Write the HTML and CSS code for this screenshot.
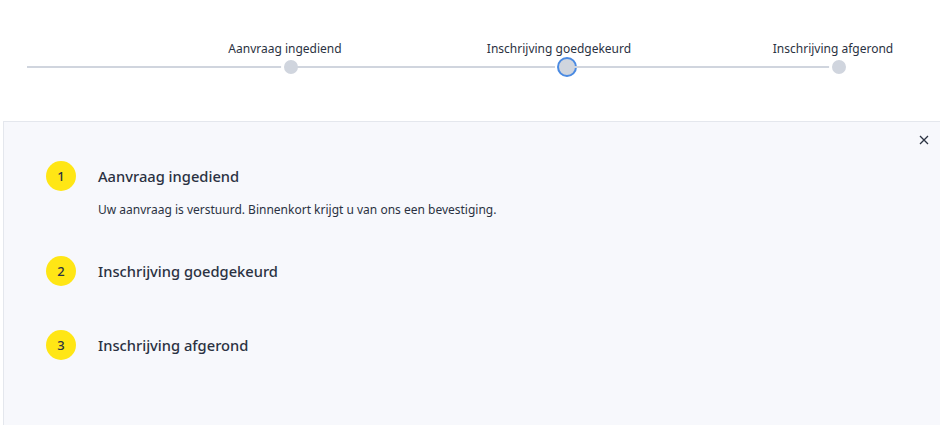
FILE: index.html
```html
<!DOCTYPE html>
<html lang="nl">
<head>
    <meta charset="utf-8">
    <meta name="viewport" content="width=device-width, initial-scale=1.0">
    <title>Inschrijving - voortgang</title>
    <link rel="stylesheet" href="styles.css">
</head>
<body>
    <!-- Voortgangsbalk -->
    <div class="progress">
        <div class="progress-step first">
            <span class="progress-label">Aanvraag ingediend</span>
            <span class="progress-dot"></span>
        </div>
        <div class="progress-step">
            <span class="progress-label">Inschrijving goedgekeurd</span>
            <span class="progress-dot active"></span>
        </div>
        <div class="progress-step">
            <span class="progress-label">Inschrijving afgerond</span>
            <span class="progress-dot"></span>
        </div>
    </div>

    <!-- Detailpaneel -->
    <div class="panel">
        <button class="panel-close" title="Sluiten">
            <svg width="10" height="10" viewBox="0 0 10 10"><path d="M1 1 L9 9 M9 1 L1 9" stroke="#2b3242" stroke-width="1.3" fill="none"/></svg>
        </button>

        <div class="step">
            <div class="step-head">
                <span class="step-number">1</span>
                <span class="step-title">Aanvraag ingediend</span>
            </div>
            <div class="step-body">Uw aanvraag is verstuurd. Binnenkort krijgt u van ons een bevestiging.</div>
        </div>

        <div class="step">
            <div class="step-head">
                <span class="step-number">2</span>
                <span class="step-title">Inschrijving goedgekeurd</span>
            </div>
            <div class="step-body"></div>
        </div>

        <div class="step">
            <div class="step-head">
                <span class="step-number">3</span>
                <span class="step-title">Inschrijving afgerond</span>
            </div>
            <div class="step-body"></div>
        </div>
    </div>
</body>
</html>
```

FILE: styles.css
```css
body {
    font-family: 'Noto Sans', sans-serif;
    margin: 0;
    padding: 0;
    background-color: rgb(255, 255, 255);
    color: rgb(43, 50, 66);
    overflow: hidden;
}

/* voortgangsbalk bovenaan */
.progress {
    display: grid;
    grid-template-columns: 264px 274px 274px;
    margin: 40px 0 0 27px;
    height: 81px;
}
.progress-step {
    display: flex;
    flex-direction: column;
    align-items: flex-end;
    background: linear-gradient(rgb(208, 213, 222), rgb(208, 213, 222)) no-repeat;
    background-size: 100% 2px;
    background-position: 0 26px;
}
.progress-label {
    width: 200px;
    margin-right: -94px;
    text-align: center;
    font-size: 12px;
    line-height: 18px;
    height: 18px;
    white-space: nowrap;
}
.progress-dot {
    width: 14px;
    height: 14px;
    margin: -1px -10px 0 0;
    border: 3px solid rgb(255, 255, 255);
    border-radius: 50%;
    background-color: rgb(208, 213, 222);
}
.progress-dot.active {
    width: 16px;
    height: 16px;
    margin: -1px -12px 0 0;
    border: 2px solid rgb(74, 138, 226);
    box-shadow: 0 0 0 2px rgb(255, 255, 255);
}

/* paneel met stappen */
.panel {
    position: relative;
    margin-left: 3px;
    margin-right: -20px;
    padding: 39px 0 20px 42px;
    min-height: 300px;
    background-color: rgb(247, 248, 252);
    border: 1px solid rgb(228, 231, 237);
}
.panel-close {
    position: absolute;
    top: 8px;
    right: 25px;
    width: 20px;
    height: 20px;
    padding: 0;
    border: none;
    background: none;
    cursor: pointer;
    display: flex;
    align-items: center;
    justify-content: center;
}
.step {
    margin-bottom: 36px;
}
.step-head {
    display: flex;
    align-items: center;
    gap: 22px;
}
.step-number {
    width: 30px;
    height: 30px;
    border-radius: 50%;
    background-color: rgb(255, 230, 21);
    display: flex;
    align-items: center;
    justify-content: center;
    font-size: 13px;
    font-weight: 500;
}
.step-title {
    font-size: 14.7px;
    font-weight: 500;
    line-height: 30px;
}
.step-body {
    padding-top: 8px;
    margin-left: 52px;
    font-size: 12px;
    line-height: 21px;
}
```
